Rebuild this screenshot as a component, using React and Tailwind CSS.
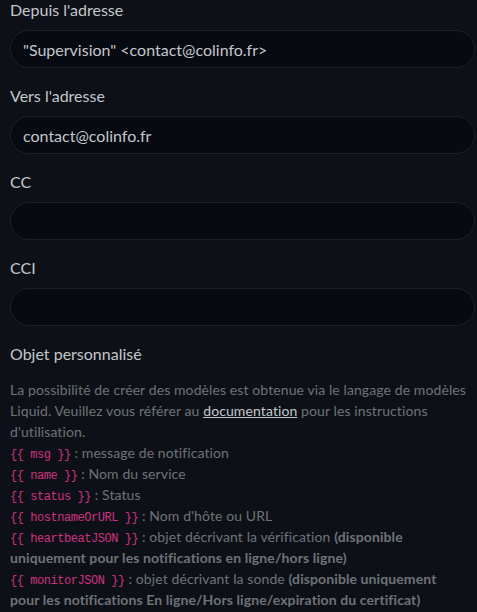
import React from "react"

const fields = [
  { label: "Depuis l'adresse", value: "\"Supervision\" <contact@colinfo.fr>" },
  { label: "Vers l'adresse", value: "contact@colinfo.fr" },
  { label: "CC", value: "" },
  { label: "CCI", value: "" },
]

function Code({ children }) {
  return (
    <code className="leading-none text-[#cf3180] text-[12px] tracking-[-0.45px] font-['Liberation_Mono',monospace]">
      {"{{ "}
      {children}
      {" }}"}
    </code>
  )
}

export default function App() {
  return (
    <div className="min-h-[612px] bg-[#0d1117] pl-[10px] pr-[2px] font-['Lato',sans-serif] overflow-hidden">
      <div className="-mt-[2px]">
        {fields.map((f) => (
          <div key={f.label} className="mb-4">
            <label className="block mb-2 text-[16px] leading-6 text-[#c3c7cc]">{f.label}</label>
            <input
              readOnly
              value={f.value}
              className="block w-full h-[38px] px-3 rounded-full bg-[#070a10] border border-[#1c2128] text-[16px] text-[#c3c7cc] outline-none font-['Lato',sans-serif]"
            />
          </div>
        ))}

        {/* Custom subject */}
        <div>
          <label className="block text-[16px] leading-6 text-[#c3c7cc]">Objet personnalisé</label>
          <div className="mt-[13px] pr-[4px] text-[14px] leading-[21px] tracking-[0.1px] text-[#6e7378]">
            La possibilité de créer des modèles est obtenue via le langage de modèles
            <br />
            Liquid. Veuillez vous référer au <a className="underline text-[#c3c7cc]">documentation</a> pour les instructions
            <br />
            d'utilisation.
            <br />
            <Code>msg</Code> : message de notification
            <br />
            <Code>name</Code> : Nom du service
            <br />
            <Code>status</Code> : Status
            <br />
            <Code>hostnameOrURL</Code> : Nom d'hôte ou URL
            <br />
            <Code>heartbeatJSON</Code> : objet décrivant la vérification <b>(disponible</b>
            <br />
            <b>uniquement pour les notifications en ligne/hors ligne)</b>
            <br />
            <Code>monitorJSON</Code> : objet décrivant la sonde <b>(disponible uniquement</b>
            <br />
            <b>pour les notifications En ligne/Hors ligne/expiration du certificat)</b>
          </div>
        </div>
      </div>
    </div>
  )
}
